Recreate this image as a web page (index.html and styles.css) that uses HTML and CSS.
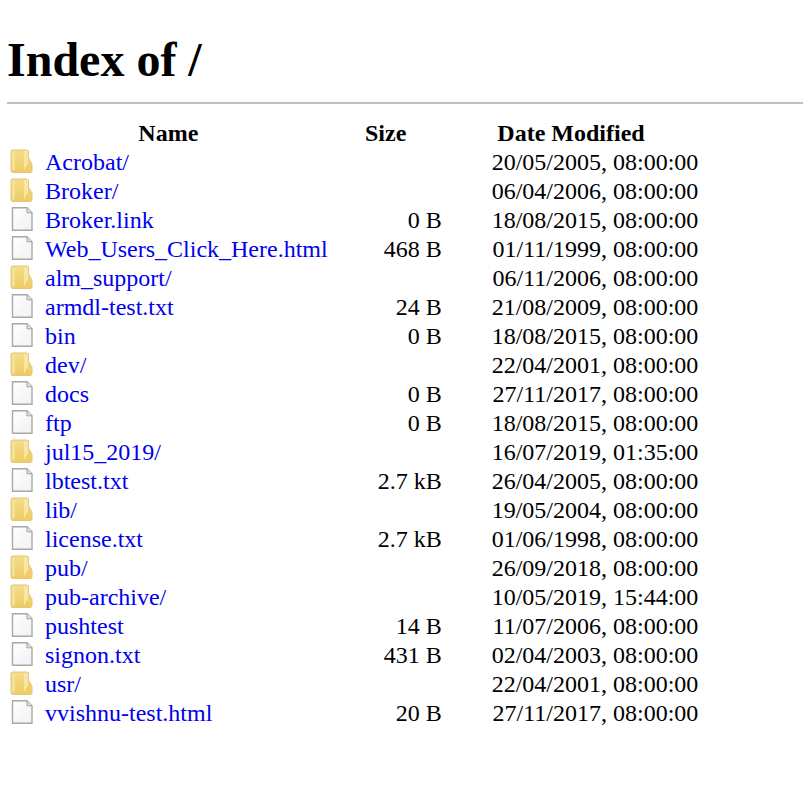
FILE: index.html
```html
<!DOCTYPE html>
<html lang="en">
<head>
<meta charset="utf-8">
<title>Index of /</title>
<link rel="stylesheet" href="styles.css">
</head>
<body>
<svg class="defs" width="0" height="0" aria-hidden="true">
  <defs>
    <linearGradient id="fg" x1="0" y1="0" x2="0" y2="1">
      <stop offset="0" stop-color="#f5dc8c"/>
      <stop offset="1" stop-color="#eecb62"/>
    </linearGradient>
    <linearGradient id="dg" x1="0" y1="0" x2="1" y2="1">
      <stop offset="0" stop-color="#ffffff"/>
      <stop offset="1" stop-color="#f1f1f1"/>
    </linearGradient>
    <symbol id="folder" viewBox="0 0 24 24">
      <path d="M2 1h15.500l1 1v7l3.500 6v7l-1 1.500H2l-1-1.500V2z" fill="url(#fg)" stroke="#e2c878" stroke-width="1"/>
      <path d="M14 2h4v13.500h-1l-3 6z" fill="#f8e6a6"/>
      <path d="M2 2.500h3v19h-3z" fill="#f6e3a0" opacity=".8"/>
    </symbol>
    <symbol id="doc" viewBox="0 0 24 24">
      <path d="M2.500 .8h14.500l5 5v17.400H2.500z" fill="url(#dg)" stroke="#a8a8a8" stroke-width="1.400"/>
      <path d="M17 .8v5h5" fill="#e2e2e2" stroke="#a0a0a0" stroke-width="1"/>
    </symbol>
  </defs>
</svg>
<h1 class="title">Index of /</h1>
<hr class="rule">
<table class="listing">
  <thead>
    <tr><th class="h-name">Name</th><th class="h-size">Size</th><th class="h-date">Date Modified</th></tr>
  </thead>
  <tbody>
    <tr><td class="name"><svg class="icon"><use href="#folder"/></svg><a href="#">Acrobat/</a></td><td class="size"></td><td class="date">20/05/2005, 08:00:00</td></tr>
    <tr><td class="name"><svg class="icon"><use href="#folder"/></svg><a href="#">Broker/</a></td><td class="size"></td><td class="date">06/04/2006, 08:00:00</td></tr>
    <tr><td class="name"><svg class="icon"><use href="#doc"/></svg><a href="#">Broker.link</a></td><td class="size">0 B</td><td class="date">18/08/2015, 08:00:00</td></tr>
    <tr><td class="name"><svg class="icon"><use href="#doc"/></svg><a href="#">Web_Users_Click_Here.html</a></td><td class="size">468 B</td><td class="date">01/11/1999, 08:00:00</td></tr>
    <tr><td class="name"><svg class="icon"><use href="#folder"/></svg><a href="#">alm_support/</a></td><td class="size"></td><td class="date">06/11/2006, 08:00:00</td></tr>
    <tr><td class="name"><svg class="icon"><use href="#doc"/></svg><a href="#">armdl-test.txt</a></td><td class="size">24 B</td><td class="date">21/08/2009, 08:00:00</td></tr>
    <tr><td class="name"><svg class="icon"><use href="#doc"/></svg><a href="#">bin</a></td><td class="size">0 B</td><td class="date">18/08/2015, 08:00:00</td></tr>
    <tr><td class="name"><svg class="icon"><use href="#folder"/></svg><a href="#">dev/</a></td><td class="size"></td><td class="date">22/04/2001, 08:00:00</td></tr>
    <tr><td class="name"><svg class="icon"><use href="#doc"/></svg><a href="#">docs</a></td><td class="size">0 B</td><td class="date">27/11/2017, 08:00:00</td></tr>
    <tr><td class="name"><svg class="icon"><use href="#doc"/></svg><a href="#">ftp</a></td><td class="size">0 B</td><td class="date">18/08/2015, 08:00:00</td></tr>
    <tr><td class="name"><svg class="icon"><use href="#folder"/></svg><a href="#">jul15_2019/</a></td><td class="size"></td><td class="date">16/07/2019, 01:35:00</td></tr>
    <tr><td class="name"><svg class="icon"><use href="#doc"/></svg><a href="#">lbtest.txt</a></td><td class="size">2.7 kB</td><td class="date">26/04/2005, 08:00:00</td></tr>
    <tr><td class="name"><svg class="icon"><use href="#folder"/></svg><a href="#">lib/</a></td><td class="size"></td><td class="date">19/05/2004, 08:00:00</td></tr>
    <tr><td class="name"><svg class="icon"><use href="#doc"/></svg><a href="#">license.txt</a></td><td class="size">2.7 kB</td><td class="date">01/06/1998, 08:00:00</td></tr>
    <tr><td class="name"><svg class="icon"><use href="#folder"/></svg><a href="#">pub/</a></td><td class="size"></td><td class="date">26/09/2018, 08:00:00</td></tr>
    <tr><td class="name"><svg class="icon"><use href="#folder"/></svg><a href="#">pub-archive/</a></td><td class="size"></td><td class="date">10/05/2019, 15:44:00</td></tr>
    <tr><td class="name"><svg class="icon"><use href="#doc"/></svg><a href="#">pushtest</a></td><td class="size">14 B</td><td class="date">11/07/2006, 08:00:00</td></tr>
    <tr><td class="name"><svg class="icon"><use href="#doc"/></svg><a href="#">signon.txt</a></td><td class="size">431 B</td><td class="date">02/04/2003, 08:00:00</td></tr>
    <tr><td class="name"><svg class="icon"><use href="#folder"/></svg><a href="#">usr/</a></td><td class="size"></td><td class="date">22/04/2001, 08:00:00</td></tr>
    <tr><td class="name"><svg class="icon"><use href="#doc"/></svg><a href="#">vvishnu-test.html</a></td><td class="size">20 B</td><td class="date">27/11/2017, 08:00:00</td></tr>
  </tbody>
</table>
</body>
</html>
```

FILE: styles.css
```css
html { background: #fff; }
body {
  margin: 8px 0 8px 7px;
  font-family: "Liberation Serif", "Times New Roman", serif;
  font-size: 24px;
  color: #000;
}
.defs { position: absolute; }
.title {
  margin: 24px 0 0;
  font-size: 48px;
  line-height: 55px;
  font-weight: bold;
}
.rule {
  margin: 15px 0 0;
  border: 0;
  height: 2px;
  background: #bfbfbf;
}
.listing {
  margin-top: 14px;
  border-collapse: separate;
  border-spacing: 2px;
}
th, td {
  padding: 0;
  line-height: 27px;
  white-space: nowrap;
}
th { font-weight: bold; text-align: center; }
.name { position: relative; padding-left: 36px; }
.size, .date { padding-left: 48px; text-align: right; }
.icon {
  position: absolute;
  left: 1px;
  top: 0;
  width: 24px;
  height: 24px;
}
a { color: #0000ee; text-decoration: none; }
```
